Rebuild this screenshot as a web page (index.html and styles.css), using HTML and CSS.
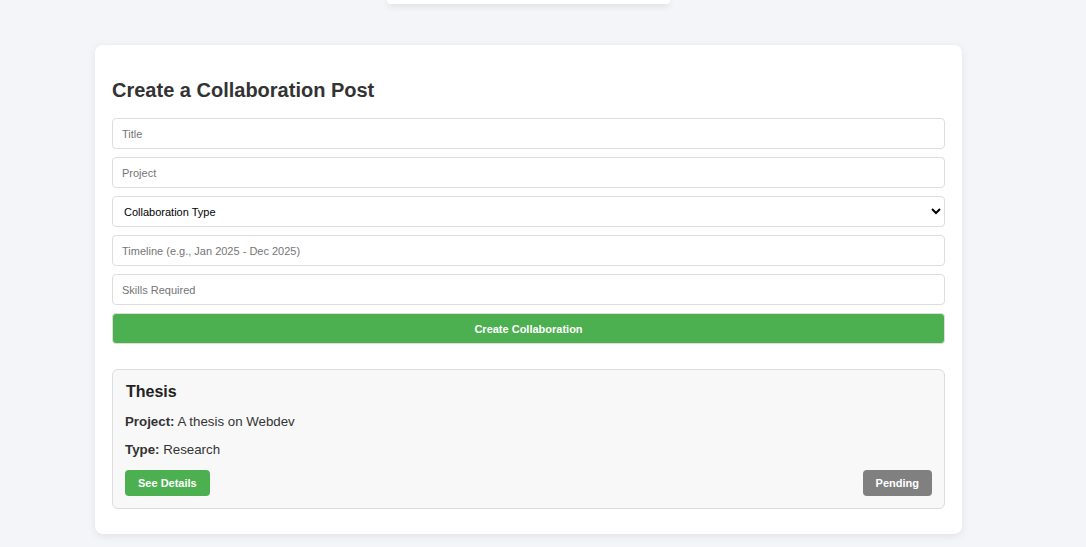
FILE: index.html
```html
<!DOCTYPE html>
<html>
<head>
<meta charset="utf-8">
<link rel="stylesheet" href="styles.css">
</head>
<body>
<div class="page">
  <div class="topbar"></div>
  <div class="card">
    <h2 class="title">Create a Collaboration Post</h2>
    <form class="form">
      <input class="field" type="text" placeholder="Title">
      <input class="field" type="text" placeholder="Project">
      <select class="field select">
        <option>Collaboration Type</option>
      </select>
      <input class="field" type="text" placeholder="Timeline (e.g., Jan 2025 - Dec 2025)">
      <input class="field" type="text" placeholder="Skills Required">
      <button class="submit" type="button">Create Collaboration</button>
    </form>
    <div class="post">
      <h3 class="post-title">Thesis</h3>
      <p class="post-line"><strong>Project:</strong> A thesis on Webdev</p>
      <p class="post-line"><strong>Type:</strong> Research</p>
      <div class="post-actions">
        <button class="btn btn-green" type="button">See Details</button>
        <button class="btn btn-gray" type="button">Pending</button>
      </div>
    </div>
  </div>
</div>
</body>
</html>
```

FILE: styles.css
```css
* { box-sizing: border-box; }
html, body { margin: 0; padding: 0; }
body {
  background: #f4f5f9;
  font-family: "Liberation Sans", Arial, sans-serif;
  color: #333;
  height: 547px;
  overflow: hidden;
}
.page {
  width: 1057px;
}
.topbar {
  width: 283px;
  height: 4px;
  margin: 0 auto;
  background: #fff;
  border-radius: 0 0 8px 8px;
  box-shadow: 0 2px 6px rgba(0,0,0,0.12);
}
.card {
  width: 867px;
  margin: 41px auto 0;
  background: #fff;
  border-radius: 8px;
  box-shadow: 0 2px 8px rgba(0,0,0,0.08);
  padding: 33px 17px 25px;
}
.title {
  margin: 0 0 16px;
  font-size: 20px;
  font-weight: bold;
  color: #333;
  line-height: 24px;
}
.form {
  display: flex;
  flex-direction: column;
  gap: 8px;
}
.field {
  display: block;
  width: 100%;
  height: 31px;
  border: 1px solid #ddd;
  border-radius: 4px;
  padding: 0 9px;
  font-family: "Liberation Sans", Arial, sans-serif;
  font-size: 11px;
  color: #000;
  background: #fff;
  outline: none;
}
.field::placeholder { color: #757575; }
.select {
  padding: 0 7px;
}
.submit {
  height: 31px;
  width: 100%;
  border: 1px solid #ddd;
  border-radius: 4px;
  background: #4caf50;
  color: #fff;
  font-family: "Liberation Sans", Arial, sans-serif;
  font-weight: bold;
  font-size: 11px;
}
.post {
  margin-top: 25px;
  background: #f8f8f8;
  border: 1px solid #ddd;
  border-radius: 6px;
  padding: 12px 12px 12px 12px;
}
.post-title {
  margin: 0 0 10px 1px;
  font-size: 16px;
  line-height: 20px;
  color: #222;
}
.post-line {
  margin: 0 0 9px;
  font-size: 13.3px;
  line-height: 19px;
  color: #333;
}
.post-actions {
  display: flex;
  justify-content: space-between;
  margin-top: 11px;
}
.btn {
  height: 26px;
  border: none;
  border-radius: 4px;
  color: #fff;
  font-family: "Liberation Sans", Arial, sans-serif;
  font-weight: bold;
  font-size: 11px;
  padding: 0 13px;
}
.btn-green { background: #4caf50; }
.btn-gray { background: #808080; }
```
